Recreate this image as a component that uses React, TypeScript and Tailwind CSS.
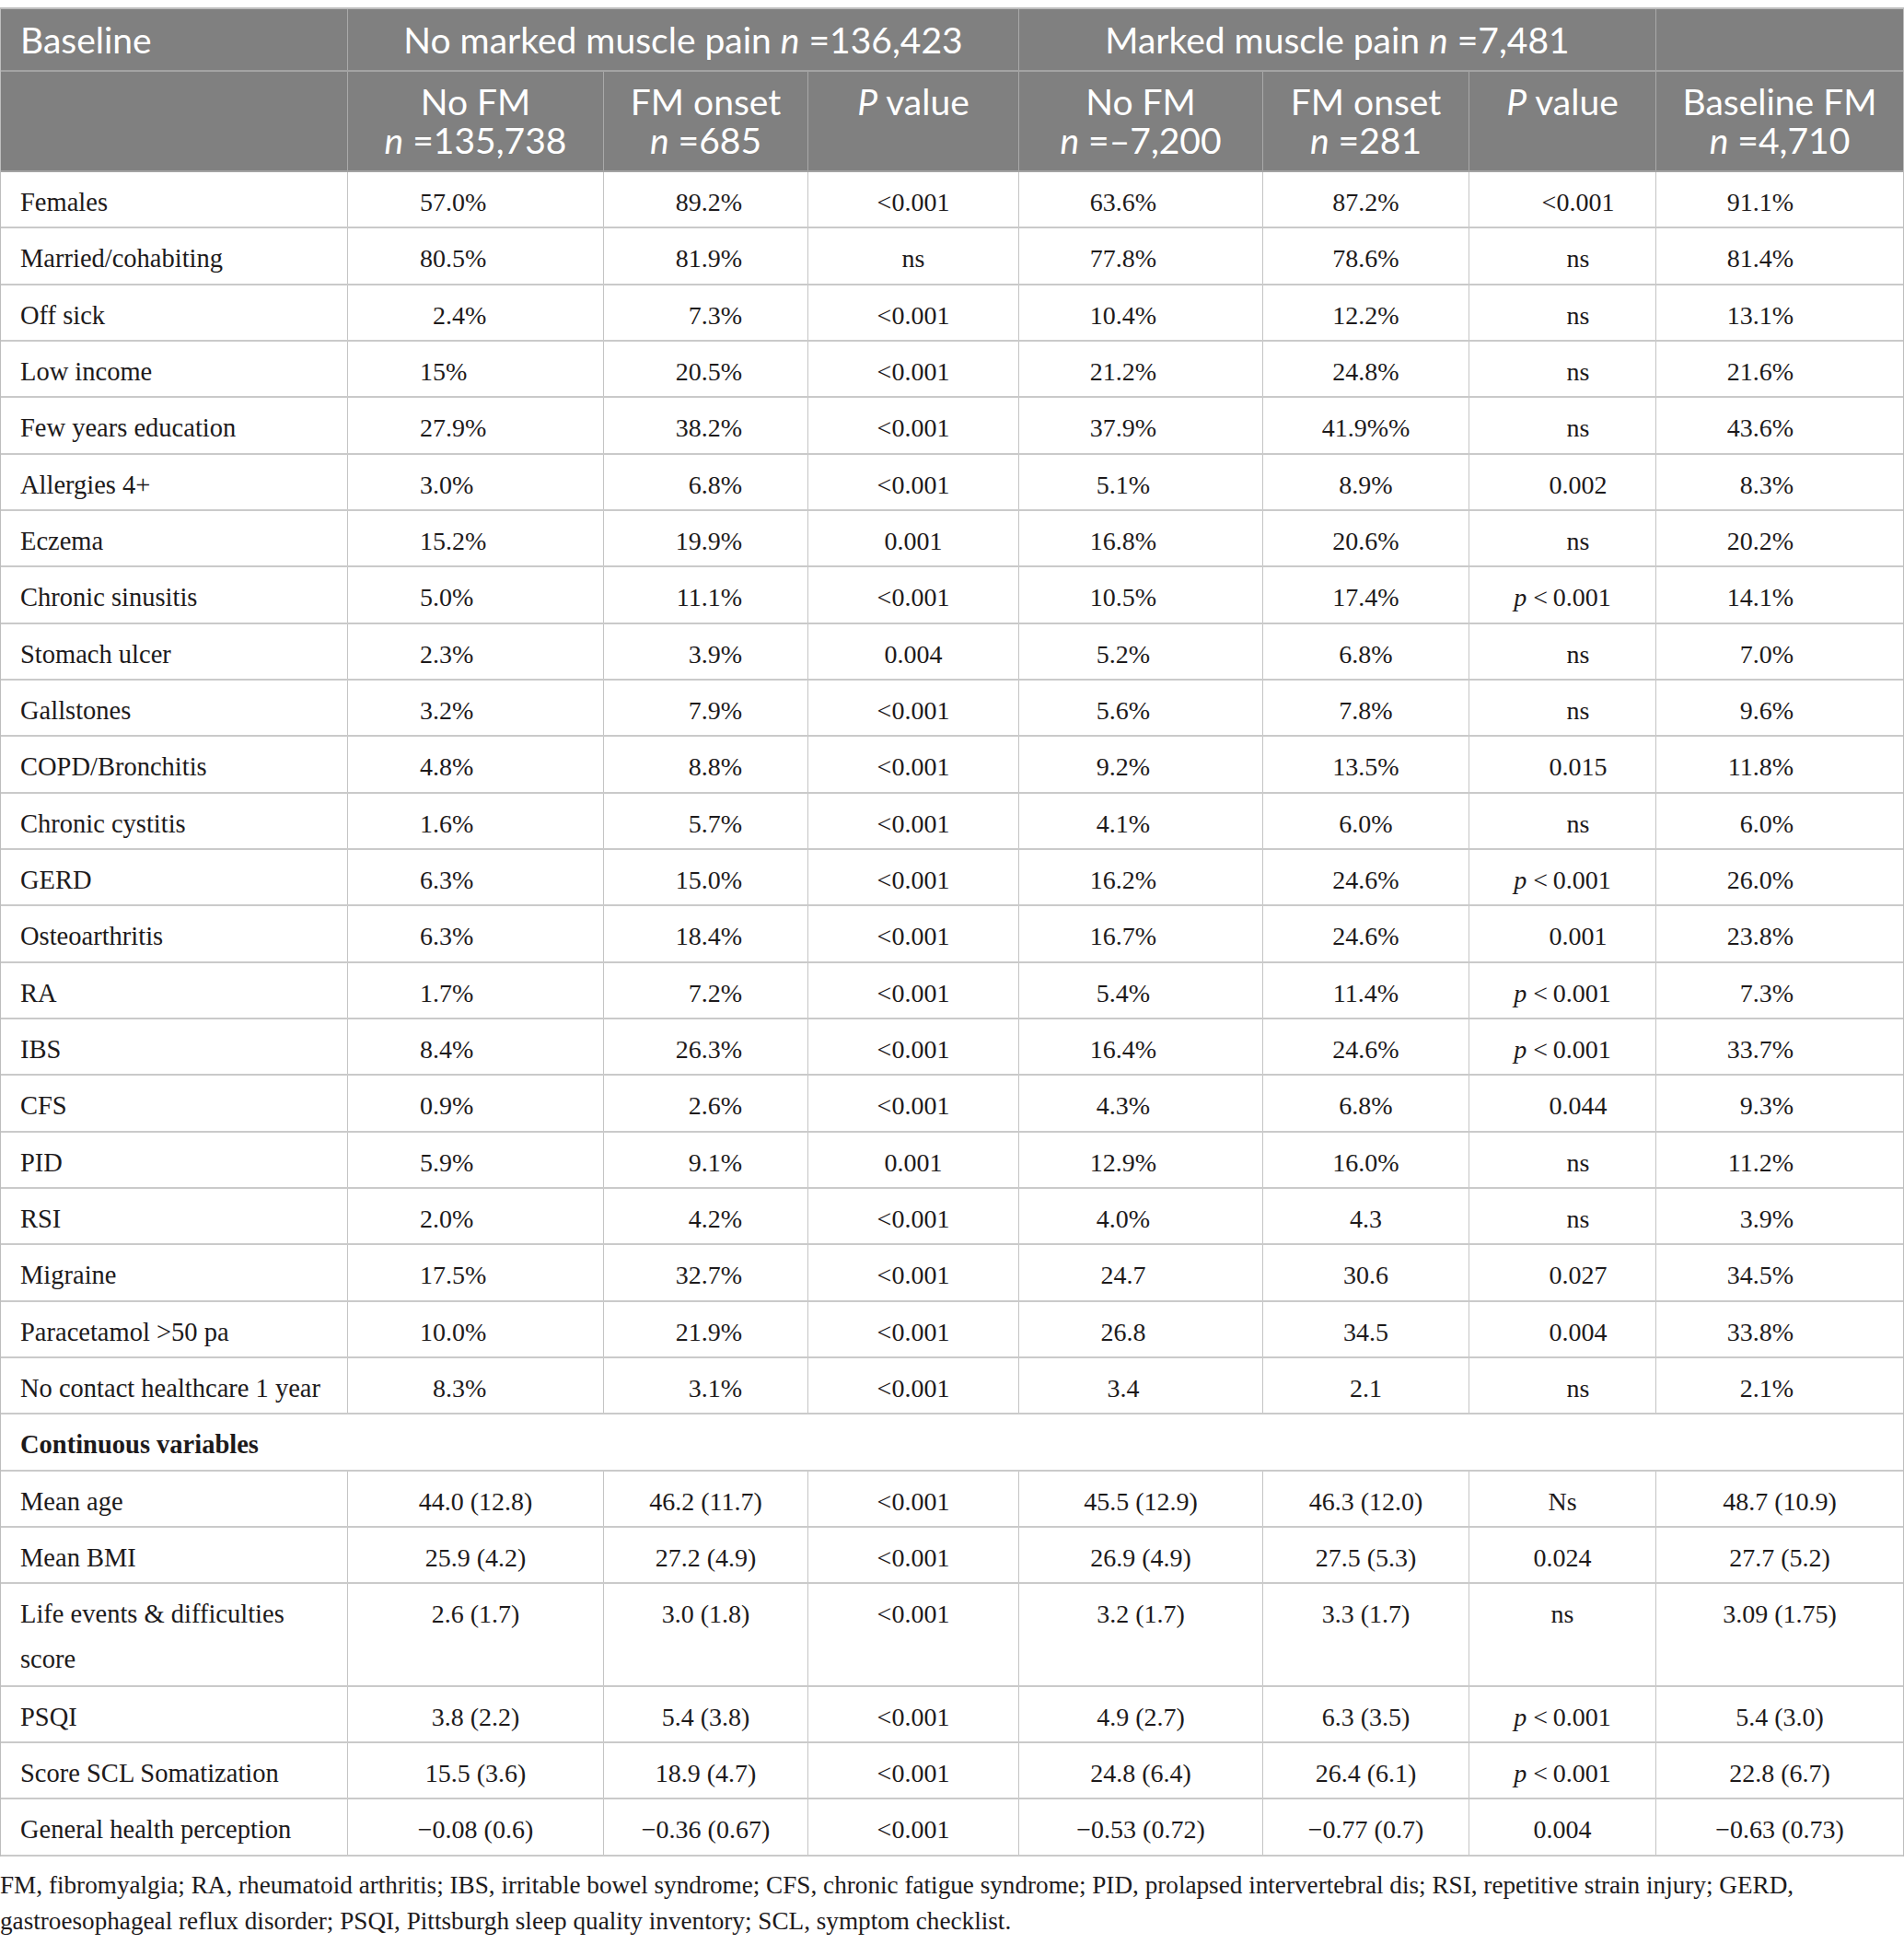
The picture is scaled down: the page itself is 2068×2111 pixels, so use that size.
import type { ReactNode } from "react";

const COLS = "grid grid-cols-[377px_278px_222px_229px_265px_224px_203px_268px]";

const P = (
  <>
    <i>p</i> &lt;{"\u2009"}0.001
  </>
);

type Row = (string | "P")[];

const categorical: Row[] = [
  ["Females", "57.0%", "89.2%", "<0.001", "63.6%", "87.2%", "<0.001", "91.1%"],
  ["Married/cohabiting", "80.5%", "81.9%", "ns", "77.8%", "78.6%", "ns", "81.4%"],
  ["Off sick", "\u20072.4%", "7.3%", "<0.001", "10.4%", "12.2%", "ns", "13.1%"],
  ["Low income", "15%", "20.5%", "<0.001", "21.2%", "24.8%", "ns", "21.6%"],
  ["Few years education", "27.9%", "38.2%", "<0.001", "37.9%", "41.9%%", "ns", "43.6%"],
  ["Allergies 4+", "3.0%", "6.8%", "<0.001", "5.1%", "8.9%", "0.002", "8.3%"],
  ["Eczema", "15.2%", "19.9%", "0.001", "16.8%", "20.6%", "ns", "20.2%"],
  ["Chronic sinusitis", "5.0%", "11.1%", "<0.001", "10.5%", "17.4%", "P", "14.1%"],
  ["Stomach ulcer", "2.3%", "3.9%", "0.004", "5.2%", "6.8%", "ns", "7.0%"],
  ["Gallstones", "3.2%", "7.9%", "<0.001", "5.6%", "7.8%", "ns", "9.6%"],
  ["COPD/Bronchitis", "4.8%", "8.8%", "<0.001", "9.2%", "13.5%", "0.015", "11.8%"],
  ["Chronic cystitis", "1.6%", "5.7%", "<0.001", "4.1%", "6.0%", "ns", "6.0%"],
  ["GERD", "6.3%", "15.0%", "<0.001", "16.2%", "24.6%", "P", "26.0%"],
  ["Osteoarthritis", "6.3%", "18.4%", "<0.001", "16.7%", "24.6%", "0.001", "23.8%"],
  ["RA", "1.7%", "7.2%", "<0.001", "5.4%", "11.4%", "P", "7.3%"],
  ["IBS", "8.4%", "26.3%", "<0.001", "16.4%", "24.6%", "P", "33.7%"],
  ["CFS", "0.9%", "2.6%", "<0.001", "4.3%", "6.8%", "0.044", "9.3%"],
  ["PID", "5.9%", "9.1%", "0.001", "12.9%", "16.0%", "ns", "11.2%"],
  ["RSI", "2.0%", "4.2%", "<0.001", "4.0%", "4.3", "ns", "3.9%"],
  ["Migraine", "17.5%", "32.7%", "<0.001", "24.7", "30.6", "0.027", "34.5%"],
  ["Paracetamol >50 pa", "10.0%", "21.9%", "<0.001", "26.8", "34.5", "0.004", "33.8%"],
  ["No contact healthcare 1 year", "\u20078.3%", "\u20073.1%", "<0.001", "3.4", "2.1", "ns", "2.1%"],
];

const continuous: Row[] = [
  ["Mean age", "44.0 (12.8)", "46.2 (11.7)", "<0.001", "45.5 (12.9)", "46.3 (12.0)", "Ns", "48.7 (10.9)"],
  ["Mean BMI", "25.9 (4.2)", "27.2 (4.9)", "<0.001", "26.9 (4.9)", "27.5 (5.3)", "0.024", "27.7 (5.2)"],
  ["Life events & difficulties|score", "2.6 (1.7)", "3.0 (1.8)", "<0.001", "3.2 (1.7)", "3.3 (1.7)", "ns", "3.09 (1.75)"],
  ["PSQI", "3.8 (2.2)", "5.4 (3.8)", "<0.001", "4.9 (2.7)", "6.3 (3.5)", "P", "5.4 (3.0)"],
  ["Score SCL Somatization", "15.5 (3.6)", "18.9 (4.7)", "<0.001", "24.8 (6.4)", "26.4 (6.1)", "P", "22.8 (6.7)"],
  ["General health perception", "\u22120.08 (0.6)", "\u22120.36 (0.67)", "<0.001", "\u22120.53 (0.72)", "\u22120.77 (0.7)", "0.004", "\u22120.63 (0.73)"],
];

// alignment of the categorical block, column by column (source is uneven)
const CAT_ALIGN = [
  "pl-[21px] text-left text-[28.5px]",
  "pl-[78px] text-left",
  "pr-[71px] text-right",
  "text-center",
  "pr-[38px] text-center",
  "text-center",
  "pl-[34px] text-center",
  "pr-[119px] text-right",
];

function Cell({ children, className = "", last = false }: { children?: ReactNode; className?: string; last?: boolean }) {
  return (
    <div className={`whitespace-pre pt-[8px] leading-[49px] ${last ? "" : "border-r border-[#c4c4c4]"} ${className}`}>
      {children}
    </div>
  );
}

function DataRow({ row, cat }: { row: Row; cat: boolean }) {
  const tall = row[0].includes("|");
  return (
    <div className={`${COLS} border-b-2 border-[#cacaca] ${tall ? "h-[111.5px]" : "h-[61.33px]"}`}>
      {row.map((v, i) => {
        let content: ReactNode = v;
        if (i === 0 && tall) {
          const [a, b] = v.split("|");
          content = (
            <>
              {a}
              <br />
              {b}
            </>
          );
        }
        if (v === "P") content = P;
        let align = cat ? CAT_ALIGN[i] : i === 0 ? "pl-[21px] text-left text-[28.5px]" : "text-center";
        if (cat && i === 6 && v === "P") align = "text-center";
        return (
          <Cell key={i} last={i === 7} className={align}>
            {content}
          </Cell>
        );
      })}
    </div>
  );
}

function HeadCell({ children, className = "", last = false }: { children?: ReactNode; className?: string; last?: boolean }) {
  return <div className={`${last ? "" : "border-r border-[#a9a9a9]"} ${className}`}>{children}</div>;
}

export default function App() {
  return (
    <div className="w-[2068px] bg-white pt-[8px] text-[#1d1a1b]">
      <div className="border-x border-t-2 border-[#bdbdbd]">
        {/* header */}
        <div className="bg-[#808080] font-['Lato',sans-serif] text-[39px] leading-[42px] text-white">
          <div className={`${COLS} h-[68px] border-b-2 border-[#a3a3a3]`}>
            <HeadCell className="pl-[21px] pt-[12px]">Baseline</HeadCell>
            <HeadCell className="col-span-3 pt-[12px] text-center">
              No marked muscle pain <i>n</i> =136,423
            </HeadCell>
            <HeadCell className="col-span-3 pt-[12px] text-center">
              Marked muscle pain <i>n</i> =7,481
            </HeadCell>
            <HeadCell last />
          </div>
          <div className={`${COLS} h-[109px] border-b-2 border-[#a3a3a3]`}>
            <HeadCell />
            <HeadCell className="pt-[11px] text-center">
              No FM
              <br />
              <i>n</i> =135,738
            </HeadCell>
            <HeadCell className="pt-[11px] text-center">
              FM onset
              <br />
              <i>n</i> =685
            </HeadCell>
            <HeadCell className="pt-[11px] text-center">
              <i>P</i> value
            </HeadCell>
            <HeadCell className="pt-[11px] text-center">
              No FM
              <br />
              <i>n</i> =–7,200
            </HeadCell>
            <HeadCell className="pt-[11px] text-center">
              FM onset
              <br />
              <i>n</i> =281
            </HeadCell>
            <HeadCell className="pt-[11px] text-center">
              <i>P</i> value
            </HeadCell>
            <HeadCell last className="pt-[11px] text-center">
              Baseline FM
              <br />
              <i>n</i> =4,710
            </HeadCell>
          </div>
        </div>

        {/* body */}
        <div className="font-['Liberation_Serif',serif] text-[28px]">
          {categorical.map((r) => (
            <DataRow key={r[0]} row={r} cat />
          ))}
          <div className="h-[61.33px] border-b-2 border-[#cacaca] pl-[21px] pt-[8px] text-[28.5px] font-bold leading-[49px]">
            Continuous variables
          </div>
          {continuous.map((r) => (
            <DataRow key={r[0]} row={r} cat={false} />
          ))}
        </div>
      </div>

      {/* footnote */}
      <p className="mt-[12px] whitespace-nowrap pb-[20px] font-['Liberation_Serif',serif] text-[27.2px] leading-[39px]">
        FM, fibromyalgia; RA, rheumatoid arthritis; IBS, irritable bowel syndrome; CFS, chronic fatigue syndrome; PID,
        prolapsed intervertebral dis; RSI, repetitive strain injury; GERD,
        <br />
        gastroesophageal reflux disorder; PSQI, Pittsburgh sleep quality inventory; SCL, symptom checklist.
      </p>
    </div>
  );
}
